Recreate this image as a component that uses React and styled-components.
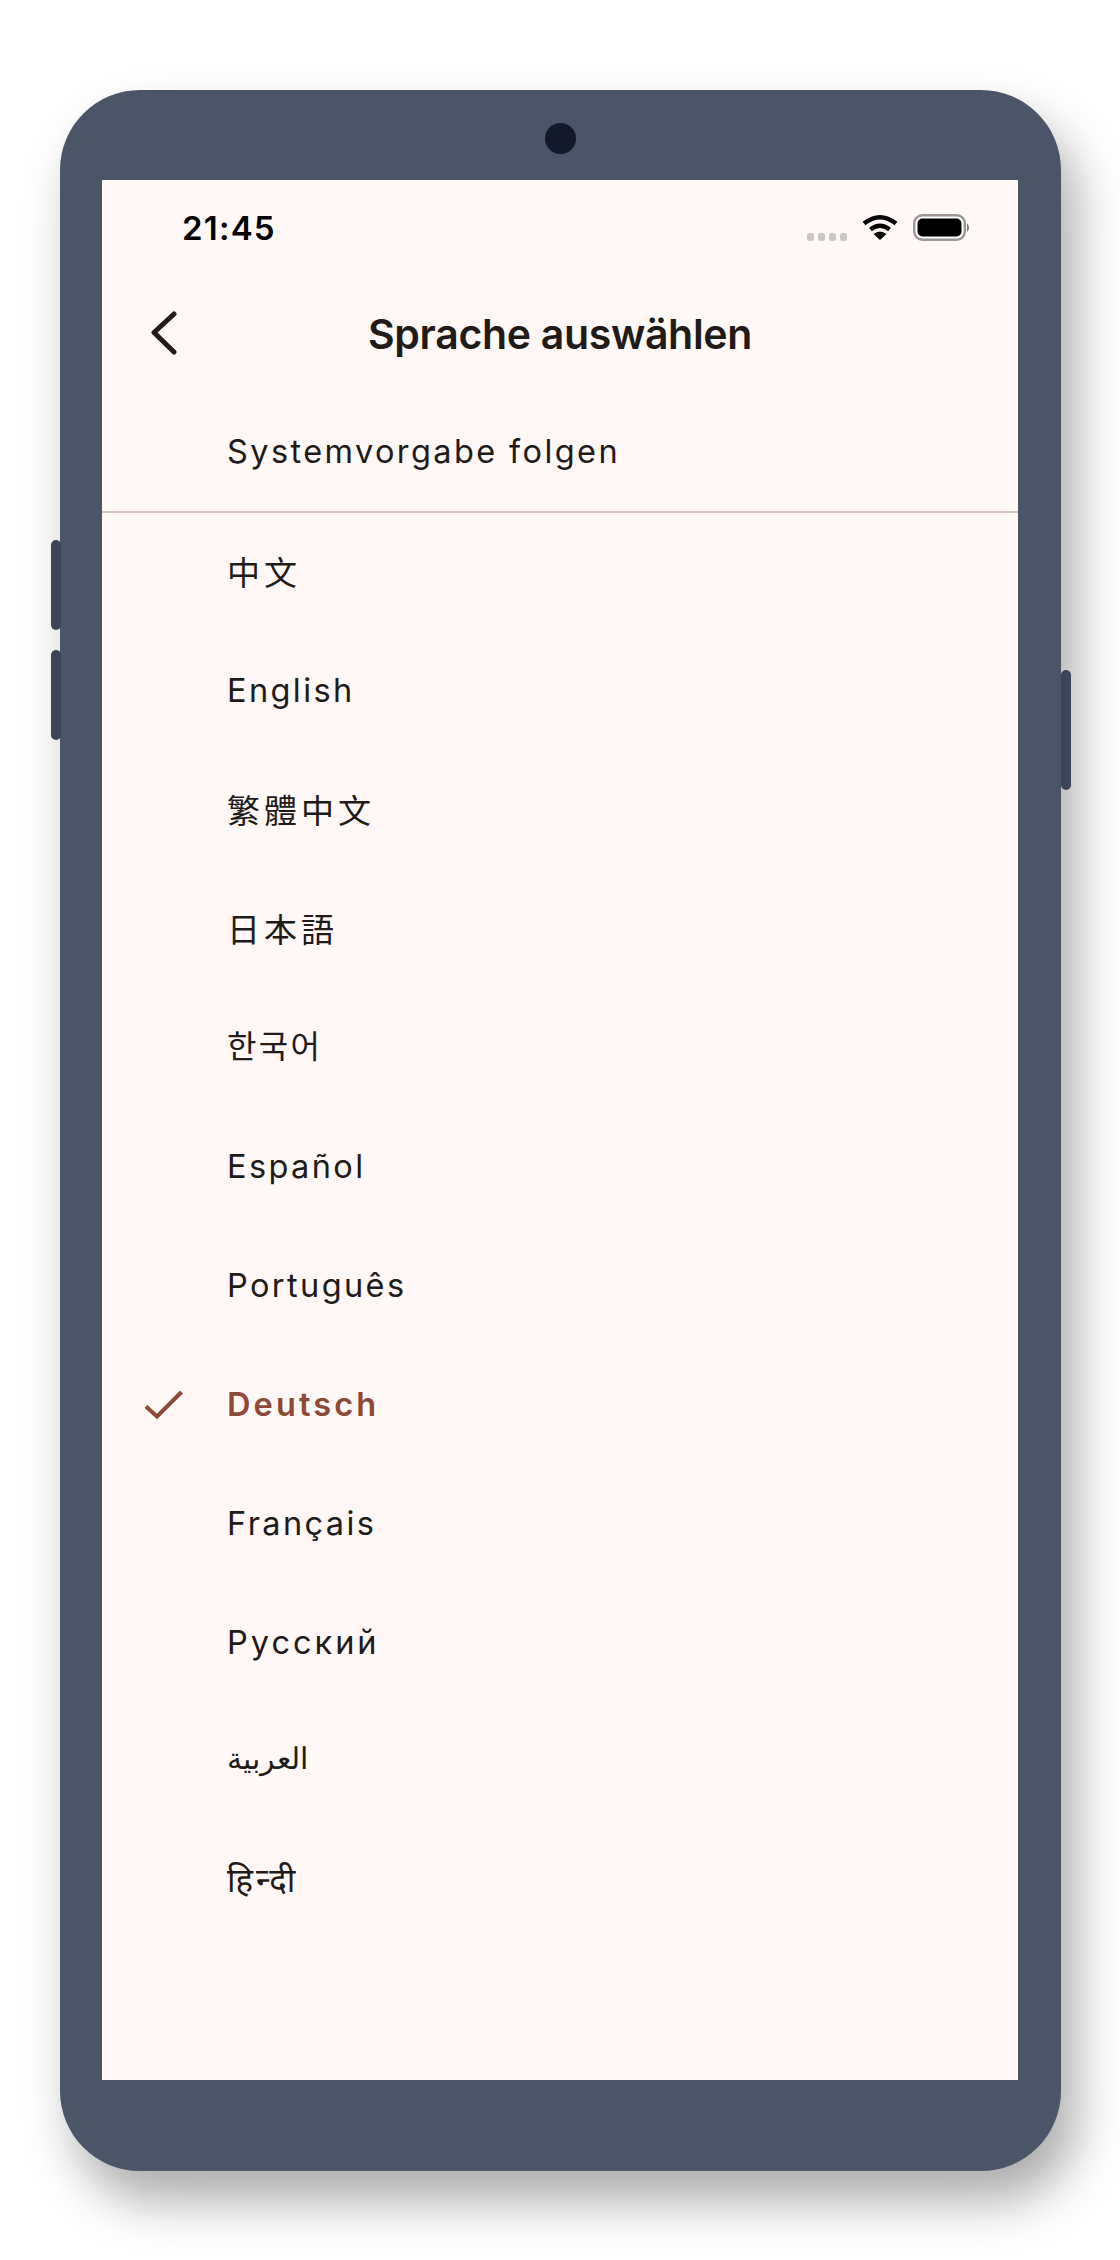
import React from 'react';
import styled, { createGlobalStyle } from 'styled-components';

const Global = createGlobalStyle`
  html, body { margin: 0; padding: 0; background: #fff; }
  body { font-family: Inter, "Noto Sans CJK SC", "Noto Sans", sans-serif; }
`;
const Page = styled.div`
  width: 1120px; height: 2260px; overflow: hidden;
  padding: 90px 0 0 60px; box-sizing: border-box;
`;
const Frame = styled.div`
  position: relative; width: 1001px; height: 2081px; box-sizing: border-box;
  padding: 90px 43px 90px 42px; background: #4a5568; border-radius: 80px;
  box-shadow: 15px 30px 50px rgba(0,0,0,.33);
`;
const Camera = styled.div`
  position: absolute; top: 33px; left: 485px; width: 31px; height: 31px;
  border-radius: 50%; background: #111827;
`;
const SideButton = styled.div`
  position: absolute; width: 10px; border-radius: 5px; background: #3c4457;
  top: ${p => p.$top}px; height: ${p => p.$h}px;
  ${p => p.$right ? 'left: 1001px;' : 'left: -9px;'}
`;
const Screen = styled.div`
  height: 1900px; background: #fff8f6; display: flex; flex-direction: column; color: #201a18;
`;
const StatusBar = styled.div`
  height: 95px; display: flex; align-items: flex-start; justify-content: space-between;
  padding: 28px 47px 0 80px; box-sizing: border-box; color: #000;
`;
const Time = styled.span`
  font-size: 33px; font-weight: 600; line-height: 40px; letter-spacing: 1.2px;
`;
const StatusIcons = styled.div`
  display: flex; align-items: flex-start;
`;
const SignalDots = styled.div`
  display: flex; gap: 3.5px; margin: 25px 15px 0 0;
`;
const Dot = styled.span`
  width: 7.5px; height: 7.5px; border-radius: 2.5px; background: #cbc7c4;
`;
const AppBar = styled.header`
  height: 118px; display: grid; grid-template-columns: 118px 1fr 118px; align-items: center;
`;
const BackIcon = styled.svg`
  margin: -2px 0 0 47px; display: block;
`;
const Title = styled.h1`
  margin: 0; font-size: 41px; font-weight: 600; text-align: center; letter-spacing: -.32px; line-height: 50px; white-space: nowrap;
`;
const Row = styled.div`
  height: 119px; box-sizing: border-box; display: grid; grid-template-columns: 83px 1fr;
  align-items: center; padding-left: 42px; font-size: 32.5px; line-height: 44px; letter-spacing: 2.4px;
  color: ${p => p.$selected ? '#8c4a36' : '#201a18'};
  font-weight: ${p => p.$selected ? 600 : 400};
  ${p => p.$selected && 'letter-spacing: 3.1px;'}
  ${p => p.$divider && 'height: 120px; margin-bottom: -1px; border-bottom: 2px solid #dcc3bd;'}
`;
const Label = styled.span`
  grid-column: 2; white-space: nowrap;
`;
const CyrillicLabel = styled(Label)`
  letter-spacing: 3px;
`;
const CjkLabel = styled(Label)`
  font-size: 33px; letter-spacing: 4px; margin-top: 2px;
`;
const KoreanLabel = styled(Label)`
  font-family: "Noto Sans CJK KR", sans-serif; font-size: 32px; letter-spacing: 2.3px; margin-top: -8px;
`;
const ArabicLabel = styled(Label)`
  font-size: 30px; letter-spacing: 0; margin-top: -7px; justify-self: start;
`;
const HindiLabel = styled(Label)`
  font-size: 33px; letter-spacing: 3px; margin-top: -2px;
`;
const Check = styled.svg`
  grid-column: 1; display: block; overflow: visible;
`;

const langs = [
  ['中文', CjkLabel, 'zh-CN'], ['English', Label], ['繁體中文', CjkLabel, 'zh-TW'], ['日本語', CjkLabel, 'ja'],
  ['한국어', KoreanLabel, 'ko'], ['Español', Label], ['Português', Label], ['Deutsch', Label], ['Français', Label],
  ['Русский', CyrillicLabel], ['العربية', ArabicLabel, 'ar'], ['हिन्दी', HindiLabel, 'hi'],
];

export default function App() {
  return (
    <Page>
      <Global />
      <Frame>
        <Camera />
        <SideButton $top={450} $h={90} />
        <SideButton $top={560} $h={90} />
        <SideButton $right $top={580} $h={120} />
        <Screen>
          <StatusBar>
            <Time>21:45</Time>
            <StatusIcons>
              <SignalDots><Dot /><Dot /><Dot /><Dot /></SignalDots>
              <svg width="36" height="26" viewBox="0 0 36 26" style={{ marginRight: 15, marginTop: 6 }}>
                <path d="M2 9.5Q18 -3 34 9.5" fill="none" stroke="#000" strokeWidth="4.5" />
                <path d="M8.5 15.5Q18 8 27.5 15.5" fill="none" stroke="#000" strokeWidth="4.5" />
                <path d="M18 26L11.5 20Q18 15 24.5 20Z" fill="#000" />
              </svg>
              <svg width="58" height="28" viewBox="0 0 58 28" style={{ marginTop: 6 }}>
                <rect x="1.2" y="1.2" width="50.6" height="24.6" rx="8" fill="#fff" stroke="#9b9794" strokeWidth="2.4" />
                <rect x="4.5" y="4.5" width="44" height="18" rx="5" fill="#000" />
                <path d="M54 9Q58 13.5 54 18Z" fill="#7d7a78" />
              </svg>
            </StatusIcons>
          </StatusBar>
          <AppBar>
            <BackIcon width="28" height="44" viewBox="0 0 28 44">
              <path d="M25 3L5 21.5L25 41" fill="none" stroke="#201a18" strokeWidth="5" strokeLinecap="round" strokeLinejoin="round" />
            </BackIcon>
            <Title>Sprache auswählen</Title>
            <span />
          </AppBar>
          <Row $divider><Label>Systemvorgabe folgen</Label></Row>
          {langs.map(([l, Text, lang]) => {
            const sel = l === 'Deutsch';
            return (
              <Row key={l} $selected={sel}>
                {sel && (
                  <Check width="38" height="28" viewBox="0 0 38 28">
                    <path d="M2 15.5L13 25.5L37.5 1" fill="none" stroke="#8c4a36" strokeWidth="4" />
                  </Check>
                )}
                <Text lang={lang}>{l}</Text>
              </Row>
            );
          })}
        </Screen>
      </Frame>
    </Page>
  );
}
